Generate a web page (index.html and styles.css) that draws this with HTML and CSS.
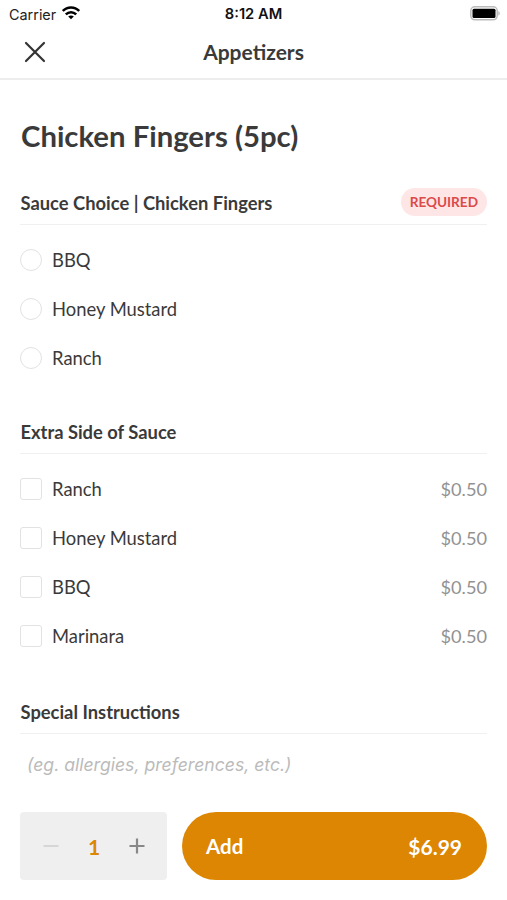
FILE: index.html
```html
<!DOCTYPE html>
<html lang="en">
<head>
<meta charset="utf-8">
<title>Chicken Fingers</title>
<link rel="stylesheet" href="styles.css">
</head>
<body>
<div class="screen">
  <div class="status">
    <div class="carrier"><span>Carrier</span>
      <svg width="18" height="14" viewBox="0 0 18 14" fill="none" stroke="#000" stroke-width="2.5"><path d="M.8 5C5.300.3 12.700.3 17.200 5"/><path d="M3.800 8.300c3-2.900 7.400-2.900 10.400 0"/><path d="M9 13.300 6.200 10.500c1.600-1.400 4-1.400 5.600 0z" fill="#000" stroke="none"/></svg>
    </div>
    <div class="time">8:12 AM</div>
    <svg class="battery" width="31" height="15" viewBox="0 0 31 15"><rect x=".8" y=".8" width="26.400" height="13" rx="4" fill="none" stroke="#bbb" stroke-width="1.500"/><rect x="2.500" y="2.700" width="23" height="9.200" rx="1.500"/><path d="M28.300 5v4.600c2-.8 2-3.800 0-4.600z" fill="#bbb"/></svg>
  </div>
  <header class="nav">
    <svg class="close" width="22" height="22" viewBox="0 0 22 22" stroke="#333" stroke-width="2.200" stroke-linecap="round"><path d="M2 2l18 18M20 2L2 20"/></svg>
    <div class="nav-title">Appetizers</div>
  </header>
  <main class="content">
    <h1>Chicken Fingers (5pc)</h1>
    <section class="group sauce">
      <div class="head"><h2>Sauce Choice | Chicken Fingers</h2><span class="badge">REQUIRED</span></div>
      <div class="row"><i class="radio"></i><span>BBQ</span></div>
      <div class="row"><i class="radio"></i><span>Honey Mustard</span></div>
      <div class="row"><i class="radio"></i><span>Ranch</span></div>
    </section>
    <section class="group extra">
      <div class="head"><h2>Extra Side of Sauce</h2></div>
      <div class="row"><i class="check"></i><span>Ranch</span><span class="price">$0.50</span></div>
      <div class="row"><i class="check"></i><span>Honey Mustard</span><span class="price">$0.50</span></div>
      <div class="row"><i class="check"></i><span>BBQ</span><span class="price">$0.50</span></div>
      <div class="row"><i class="check"></i><span>Marinara</span><span class="price">$0.50</span></div>
    </section>
    <section class="group notes">
      <div class="head"><h2>Special Instructions</h2></div>
      <div class="hint">(eg. allergies, preferences, etc.)</div>
    </section>
  </main>
  <footer class="footer">
    <div class="stepper">
      <svg width="16" height="16" viewBox="0 0 16 16" stroke="#d3d3d3" stroke-width="1.800"><path d="M.5 8h15"/></svg>
      <span class="qty">1</span>
      <svg width="16" height="16" viewBox="0 0 16 16" stroke="#888" stroke-width="2.200"><path d="M.5 8h15M8 .5v15"/></svg>
    </div>
    <div class="add"><span>Add</span><span class="total">$6.99</span></div>
  </footer>
</div>
</body>
</html>
```
FILE: styles.css
```css
* { box-sizing: border-box; }
body { margin: 0; background: #fff; color: #3a3a3a; font-family: Lato, sans-serif; }
.screen { width: 507px; height: 900px; display: flex; flex-direction: column; overflow: hidden; }
.status, .nav, .footer { flex-shrink: 0; }
.status { height: 27px; display: grid; grid-template-columns: 1fr auto 1fr; align-items: center; padding: 0 6px 0 9px; font: 14.4px/27px Inter, sans-serif; color: #222; }
.carrier { display: flex; align-items: center; gap: 6px; }
.carrier svg { margin-top: -2px; }
.time { font-weight: 600; font-size: 14.7px; color: #111; margin: 1px 3px 0 0; }
.battery { justify-self: end; margin-top: -1px; }
.nav { height: 53px; border-bottom: 2px solid #ededed; display: grid; grid-template-columns: 1fr auto 1fr; align-items: center; padding: 0 24px 2px; }
.nav-title { font-size: 21px; font-weight: 700; }
.content { flex: 1; min-height: 0; overflow: hidden; padding: 0 20px; }
h1 { margin: 35px 0 0 1px; font-size: 29.3px; line-height: 42px; }
h2 { margin: 0 0 0 .5px; font-size: 18.35px; line-height: 24px; }
.head { display: flex; justify-content: space-between; align-items: center; border-bottom: 1px solid #f0f0f0; height: 43px; }
.sauce { margin-top: 25px; }
.badge { background: #fee6e6; color: #dc4a4a; font-size: 13.6px; font-weight: 700; line-height: 28px; border-radius: 14px; padding: 0 9px; margin-top: -3px; }
.row { display: flex; align-items: center; height: 49px; font-size: 18.4px; }
.radio, .check { width: 22px; height: 22px; border: 1.5px solid #e2e2e2; margin-right: 10px; }
.radio { border-radius: 50%; }
.check { border-radius: 3px; }
.price { margin-left: auto; color: #929292; font-size: 18.2px; }
.head + .row { margin-top: 10px; }
.extra { margin-top: 29px; }
.notes { margin-top: 31px; }
.hint { padding: 18px 7px; font: italic 17.6px/26px Inter, sans-serif; color: #bbb; }
.footer { height: 106px; display: flex; gap: 15px; padding: 18px 20px 20px; }
.stepper { width: 147px; height: 68px; background: #efefef; border-radius: 4px; display: flex; align-items: center; justify-content: space-between; padding: 0 22px 0 23px; }
.qty { color: #dc8604; font-size: 21px; font-weight: 700; }
.add { flex: 1; height: 68px; background: #dc8604; color: #fff; border-radius: 34px; display: flex; align-items: center; justify-content: space-between; padding: 0 25px 0 24px; font-size: 20.5px; font-weight: 700; }
.total { font-size: 21px; }
```
